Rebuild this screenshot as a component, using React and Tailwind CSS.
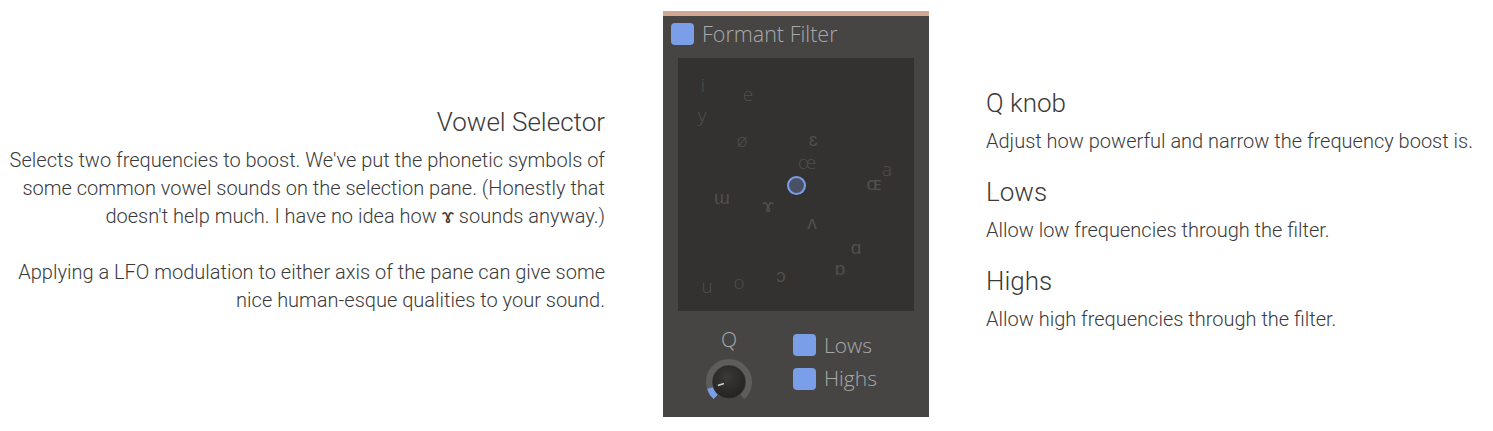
const vowels = [
  { s: "i", x: 25, y: 27 },
  { s: "e", x: 70, y: 36 },
  { s: "y", x: 24, y: 57 },
  { s: "ø", x: 64, y: 82 },
  { s: "ɛ", x: 135, y: 81 },
  { s: "œ", x: 129, y: 104 },
  { s: "a", x: 209, y: 111 },
  { s: "ɶ", x: 196, y: 125 },
  { s: "ɯ", x: 44, y: 139 },
  { s: "ɤ", x: 90, y: 147 },
  { s: "ʌ", x: 134, y: 164 },
  { s: "ɑ", x: 178, y: 189 },
  { s: "ɒ", x: 162, y: 210 },
  { s: "ɔ", x: 103, y: 217 },
  { s: "o", x: 61, y: 224 },
  { s: "u", x: 29, y: 228 },
];

function polar(cx, cy, r, deg) {
  const a = (deg * Math.PI) / 180;
  return [cx + r * Math.cos(a), cy + r * Math.sin(a)];
}

function arc(cx, cy, r, from, to) {
  const [x1, y1] = polar(cx, cy, r, from);
  const [x2, y2] = polar(cx, cy, r, to);
  const large = to - from > 180 ? 1 : 0;
  return `M ${x1} ${y1} A ${r} ${r} 0 ${large} 1 ${x2} ${y2}`;
}

function Knob({ value = 0.11 }) {
  const start = 132;
  const end = 408;
  const v = start + (end - start) * value;
  const [tx1, ty1] = polar(25, 25, 6, v);
  const [tx2, ty2] = polar(25, 25, 11, v);
  return (
    <svg width="50" height="50" viewBox="0 0 50 50">
      <defs>
        <radialGradient id="knobFill" cx="45%" cy="35%" r="65%">
          <stop offset="0%" stopColor="#3a3937" />
          <stop offset="100%" stopColor="#242322" />
        </radialGradient>
      </defs>
      <path d={arc(25, 25, 20, start, end)} stroke="#5e5d5b" strokeWidth="6" fill="none" />
      <path d={arc(25, 25, 20, start, v)} stroke="#7a9ee8" strokeWidth="6" fill="none" />
      <circle cx="25" cy="25" r="16" fill="url(#knobFill)" stroke="#2b2a29" strokeWidth="1" />
      <line x1={tx1} y1={ty1} x2={tx2} y2={ty2} stroke="#d0d0d0" strokeWidth="1.6" strokeLinecap="round" />
    </svg>
  );
}

function Box() {
  return <div className="w-[23px] h-[22px] rounded-[4px] bg-[#7a9ee8] shrink-0" />;
}

function Panel() {
  return (
    <div className="mt-[11px] w-[266px] h-[406px] bg-[#464543] flex flex-col shrink-0 font-['Open_Sans',sans-serif] text-[#a9a9a9]">
      <div className="h-[5px] bg-[#d3a792]" />
      <div className="flex items-center gap-2 pl-2 pt-[7px] h-[29px]">
        <Box />
        <span className="text-[21.5px] leading-none">Formant Filter</span>
      </div>
      <div className="relative mt-[13px] ml-[15px] w-[236px] h-[253px] bg-[#333230] overflow-hidden">
        {vowels.map((v) => (
          <span
            key={v.s}
            className="absolute -translate-x-1/2 -translate-y-1/2 text-[19px] leading-none text-[#504f4d]"
            style={{ left: v.x, top: v.y }}
          >
            {v.s}
          </span>
        ))}
        <div className="absolute left-[109px] top-[118px] w-[19px] h-[19px] rounded-full bg-[#4a5167] border-2 border-[#7a9ee8]" />
      </div>
      <div className="flex pl-[41px]">
        <div className="flex flex-col items-center w-[50px] pt-[14px]">
          <span className="text-[21px] leading-[28px]">Q</span>
          <div className="mt-[4px]">
            <Knob />
          </div>
        </div>
        <div className="flex flex-col gap-[11px] ml-[39px] pt-[23px]">
          <div className="flex items-center gap-2 h-[22px]">
            <Box />
            <span className="text-[21px] leading-none">Lows</span>
          </div>
          <div className="flex items-center gap-2 h-[23px]">
            <Box />
            <span className="text-[21px] leading-none">Highs</span>
          </div>
        </div>
      </div>
    </div>
  );
}

function Item({ title, children }) {
  return (
    <div>
      <h3 className="text-[26px] leading-[32px] mb-[8px] font-light">{title}</h3>
      <p className="text-[20px] leading-[28px]">{children}</p>
    </div>
  );
}

export default function App() {
  return (
    <div className="h-[431px] bg-white flex items-start font-['Roboto',sans-serif] font-light text-[#3a3a3a]">
      <div className="w-[605px] mt-[106px] text-right shrink-0">
        <h2 className="text-[26px] leading-[32px] mb-[8px] font-light">Vowel Selector</h2>
        <p className="text-[20px] leading-[28px]">
          Selects two frequencies to boost. We've put the phonetic symbols of
          <br />
          some common vowel sounds on the selection pane. (Honestly that
          <br />
          doesn't help much. I have no idea how ɤ sounds anyway.)
        </p>
        <p className="text-[20px] leading-[28px] mt-[28px]">
          Applying a LFO modulation to either axis of the pane can give some
          <br />
          nice human-esque qualities to your sound.
        </p>
      </div>
      <div className="ml-[58px]">
        <Panel />
      </div>
      <div className="ml-[57px] mt-[87px] flex flex-col gap-[21px] whitespace-nowrap">
        <Item title="Q knob">Adjust how powerful and narrow the frequency boost is.</Item>
        <Item title="Lows">Allow low frequencies through the filter.</Item>
        <Item title="Highs">Allow high frequencies through the filter.</Item>
      </div>
    </div>
  );
}
